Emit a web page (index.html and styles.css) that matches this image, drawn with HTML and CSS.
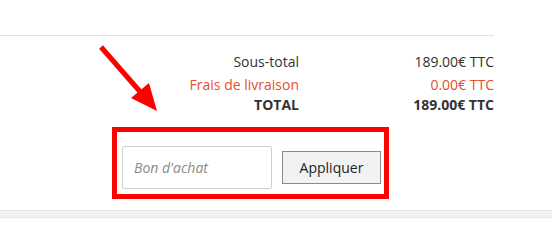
FILE: index.html
```html
<!DOCTYPE html>
<html lang="fr">
<head>
<meta charset="utf-8">
<title>Panier</title>
<link rel="stylesheet" href="styles.css">
</head>
<body>
<div class="page">
  <div class="top"></div>
  <div class="summary">
    <div class="row first"><span class="label">Sous-total</span><span class="value">189.00€ TTC</span></div>
    <div class="row shipping"><span class="label">Frais de livraison</span><span class="value">0.00€ TTC</span></div>
    <div class="row total"><span class="label">TOTAL</span><span class="value">189.00€ TTC</span></div>
  </div>
  <div class="voucher">
    <input class="voucher-input" type="text" placeholder="Bon d'achat">
    <button class="voucher-btn" type="button">Appliquer</button>
  </div>
  <div class="band"></div>
  <svg class="arrow" width="552" height="228" viewBox="0 0 552 228">
    <line x1="101" y1="47" x2="143" y2="95" stroke="#ff0000" stroke-width="5"/>
    <polygon points="157,111 131,98 149,83" fill="#ff0000"/>
  </svg>
</div>
</body>
</html>
```
FILE: styles.css
```css
* { box-sizing: border-box; }
html, body { margin: 0; padding: 0; background: #fff; }
body {
  font-family: "Open Sans", "Liberation Sans", sans-serif;
  font-size: 14px;
  line-height: 20px;
  color: #333;
}
.page { position: relative; width: 552px; height: 228px; overflow: hidden; }
.top {
  width: 494px;
  height: 36px;
  border-bottom: 1px solid #e3e3e3;
}
.summary {
  width: 494px;
  padding-top: 16px;
}
.row {
  display: grid;
  grid-template-columns: 299px 195px;
  text-align: right;
}
.row.first { margin-bottom: 3px; }
.row.shipping { color: #e4512a; }
.row.total { font-weight: 700; }
.voucher {
  margin: 12px 0 0 112px;
  width: 277px;
  height: 72px;
  border: 5px solid #ff0000;
  padding: 14px 3px 5px 5px;
  display: flex;
  align-items: center;
  gap: 10px;
}
.voucher-input {
  width: 150px;
  height: 43px;
  border: 1px solid #cfcfcf;
  border-radius: 2px;
  padding: 0 11px;
  font-family: "Open Sans", "Liberation Sans", sans-serif;
  font-size: 14px;
  color: #333;
  outline: none;
}
.voucher-input::placeholder { color: #8a8a8a; font-style: italic; }
.voucher-btn {
  width: 99px;
  height: 33px;
  border: 1px solid #8a8a8a;
  border-radius: 0;
  background: #f1f2f4;
  font-family: "Open Sans", "Liberation Sans", sans-serif;
  font-size: 14px;
  color: #222;
  padding: 0;
}
.band {
  margin-top: 11px;
  height: 8px;
  background: #f3f3f3;
  border-top: 1px solid #e4e4e4;
  border-bottom: 1px solid #e8e8e8;
}
.arrow { position: absolute; left: 0; top: 0; pointer-events: none; }
```
